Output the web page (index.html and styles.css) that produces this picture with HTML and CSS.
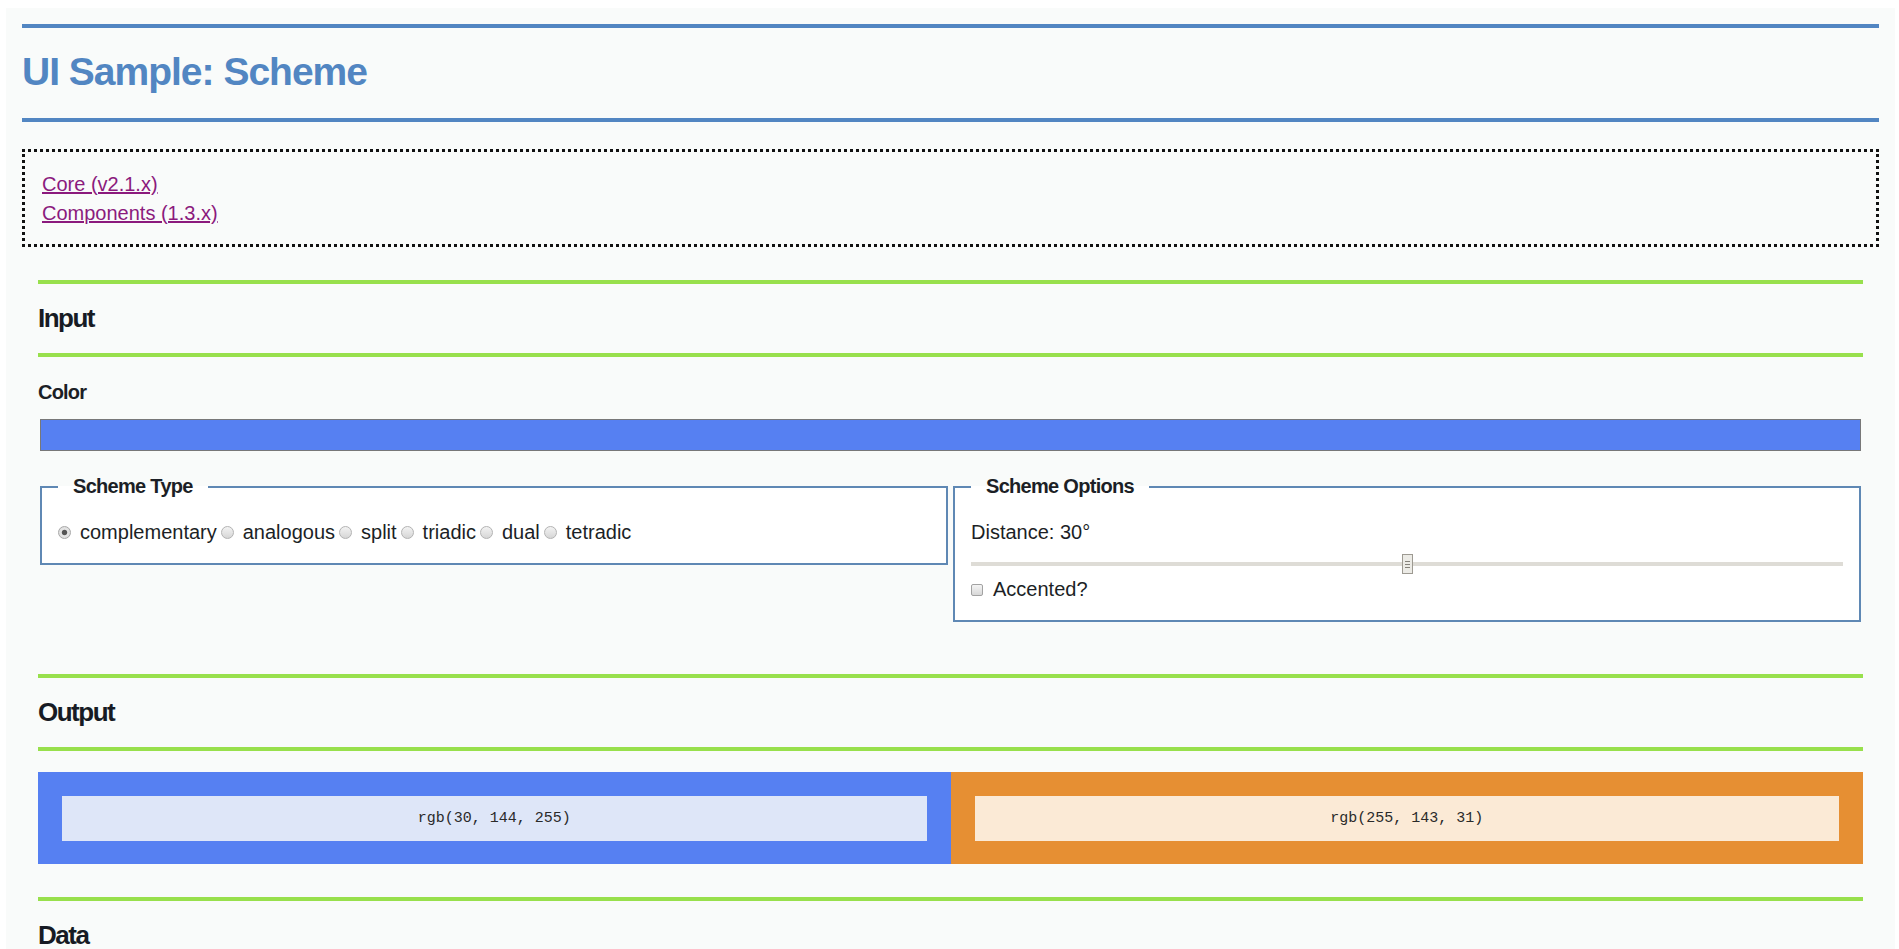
FILE: index.html
```html
<!DOCTYPE html>
<html lang="en">
<head>
<meta charset="utf-8">
<title>UI Sample: Scheme</title>
<link rel="stylesheet" href="styles.css">
</head>
<body>
<div class="page">
  <h1 class="page-title">UI Sample: Scheme</h1>
  <nav class="doc-links">
    <a class="doc-link" href="#core">Core (v2.1.x)</a>
    <a class="doc-link" href="#components">Components (1.3.x)</a>
  </nav>

  <section class="section section-input">
    <h2 class="section-title">Input</h2>
    <div class="field-label">Color</div>
    <div class="color-input" role="button" aria-label="Color"></div>
    <div class="fieldset-row">
      <fieldset class="group">
        <legend class="group-legend">Scheme Type</legend>
        <div class="radio-row">
          <label class="radio-item"><input class="radio" type="radio" name="scheme" checked><span>complementary</span></label>
          <label class="radio-item"><input class="radio" type="radio" name="scheme"><span>analogous</span></label>
          <label class="radio-item"><input class="radio" type="radio" name="scheme"><span>split</span></label>
          <label class="radio-item"><input class="radio" type="radio" name="scheme"><span>triadic</span></label>
          <label class="radio-item"><input class="radio" type="radio" name="scheme"><span>dual</span></label>
          <label class="radio-item"><input class="radio" type="radio" name="scheme"><span>tetradic</span></label>
        </div>
      </fieldset>
      <fieldset class="group">
        <legend class="group-legend">Scheme Options</legend>
        <div class="text-line">Distance: 30°</div>
        <div class="slider" role="slider" aria-valuemin="0" aria-valuemax="60" aria-valuenow="30">
          <div class="slider-track"></div>
          <div class="slider-thumb"></div>
        </div>
        <label class="check-item"><input class="checkbox" type="checkbox"><span>Accented?</span></label>
      </fieldset>
    </div>
  </section>

  <section class="section">
    <h2 class="section-title">Output</h2>
    <div class="swatches">
      <div class="swatch swatch-blue"><div class="swatch-label">rgb(30, 144, 255)</div></div>
      <div class="swatch swatch-orange"><div class="swatch-label">rgb(255, 143, 31)</div></div>
    </div>
  </section>

  <section class="section">
    <h2 class="section-title">Data</h2>
    <pre class="data-block">{ "base": "rgb(30, 144, 255)", "scheme": "complementary", "distance": 30 }</pre>
  </section>
</div>
</body>
</html>
```

FILE: styles.css
```css
html, body {
  background: #ffffff;
}

body {
  margin: 8px 4px 0 6px;
  font-family: "Liberation Sans", Arial, sans-serif;
  color: #1c1f26;
}

.page {
  background: #f9fbfa;
  padding: 16px 16px 40px;
}

.page-title {
  margin: 0;
  border-top: 4px solid #5286c2;
  border-bottom: 4px solid #5286c2;
  padding: 21px 0 24px;
  font-size: 39px;
  line-height: 45px;
  font-weight: bold;
  letter-spacing: -1px;
  color: #5286c2;
}

.doc-links {
  margin-top: 27px;
  border: 3px dotted #111111;
  padding: 18px 17px 16px;
  display: flex;
  flex-direction: column;
  align-items: flex-start;
  font-size: 20px;
  line-height: 29px;
}

.doc-link {
  color: #8b1a7d;
  text-decoration: underline;
}

.section {
  margin: 33px 16px 0;
}

.section-input {
  padding-bottom: 19px;
}

.section-title {
  margin: 0;
  border-top: 4px solid #98e04c;
  border-bottom: 4px solid #98e04c;
  padding: 19px 0 20px;
  font-size: 26px;
  line-height: 30px;
  font-weight: bold;
  letter-spacing: -1.5px;
  color: #171b24;
}

.field-label {
  margin-top: 24px;
  font-size: 20px;
  line-height: 23px;
  font-weight: bold;
  letter-spacing: -0.8px;
}

.color-input {
  margin: 15px 2px 0;
  height: 30px;
  border: 1px solid #787878;
  background: #5680f2;
}

.fieldset-row {
  display: grid;
  grid-template-columns: 1fr 1fr;
  column-gap: 5px;
  align-items: start;
  margin: 24px 2px 0;
}

.group {
  margin: 0;
  min-width: 0;
  border: 2px solid #5f88b4;
  background: #ffffff;
  padding: 23px 16px 19px;
  font-size: 20px;
  line-height: 23px;
}

.group-legend {
  padding: 0 15px;
  font-size: 20px;
  line-height: 23px;
  font-weight: bold;
  letter-spacing: -0.7px;
}

.radio-row {
  display: flex;
  align-items: center;
}

.radio-item {
  display: inline-flex;
  align-items: center;
}

.radio {
  -webkit-appearance: none;
  appearance: none;
  width: 13px;
  height: 13px;
  margin: 0 9px 0 4px;
  border: 1px solid #b3b3b3;
  border-radius: 50%;
  background: linear-gradient(#f3f3f3, #d6d6d6);
  box-sizing: border-box;
}

.radio-item:first-child .radio {
  margin-left: 0;
}

.radio:checked {
  background: radial-gradient(circle at center, #555555 0 2.2px, #e6e6e6 3.2px, #d8d8d8 100%);
  border-color: #a8a8a8;
}

.text-line {
  line-height: 23px;
}

.slider {
  position: relative;
  height: 20px;
  margin: 10px 0 4px;
}

.slider-track {
  position: absolute;
  left: 0;
  right: 0;
  top: 8px;
  height: 4px;
  background: #dedcd6;
}

.slider-thumb {
  position: absolute;
  top: 0;
  left: calc(50% - 5.5px);
  width: 9px;
  height: 18px;
  border: 1px solid #9d9a92;
  background:
    linear-gradient(#85827b, #85827b) center 6px / 5px 1px no-repeat,
    linear-gradient(#85827b, #85827b) center 9px / 5px 1px no-repeat,
    linear-gradient(#85827b, #85827b) center 12px / 5px 1px no-repeat,
    #ecebe6;
}

.check-item {
  display: flex;
  align-items: center;
  gap: 10px;
}

.checkbox {
  -webkit-appearance: none;
  appearance: none;
  margin: 0;
  width: 12px;
  height: 12px;
  border: 1px solid #a2a2a2;
  border-radius: 2px;
  background: linear-gradient(#f4f4f4, #d8d8d8);
  box-sizing: border-box;
}

.swatches {
  margin-top: 21px;
  display: grid;
  grid-template-columns: 1fr 1fr;
}

.swatch {
  padding: 24px 24px 23px;
}

.swatch-blue {
  background: #5680f2;
}

.swatch-orange {
  background: #e68f33;
}

.swatch-label {
  height: 45px;
  line-height: 45px;
  text-align: center;
  font-family: "Liberation Mono", "Courier New", monospace;
  font-size: 15px;
  color: #2a2a2a;
}

.swatch-blue .swatch-label {
  background: #dee6f8;
}

.swatch-orange .swatch-label {
  background: #fbead6;
}

.data-block {
  margin: 20px 0 0;
  font-family: "Liberation Mono", "Courier New", monospace;
  font-size: 15px;
}
```
